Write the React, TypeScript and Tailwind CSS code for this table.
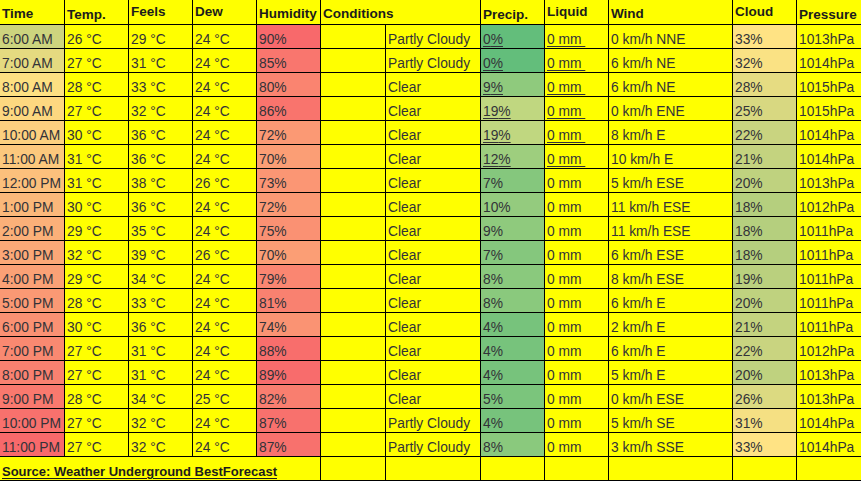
import React from 'react';

type Row = [string, number, number, number, number, string, number, string, number, number];

const rows: Row[] = [
  ['6:00 AM', 26, 29, 24, 90, 'Partly Cloudy', 0, '0 km/h NNE', 33, 1013],
  ['7:00 AM', 27, 31, 24, 85, 'Partly Cloudy', 0, '6 km/h NE', 32, 1014],
  ['8:00 AM', 28, 33, 24, 80, 'Clear', 9, '6 km/h NE', 28, 1015],
  ['9:00 AM', 27, 32, 24, 86, 'Clear', 19, '0 km/h ENE', 25, 1015],
  ['10:00 AM', 30, 36, 24, 72, 'Clear', 19, '8 km/h E', 22, 1014],
  ['11:00 AM', 31, 36, 24, 70, 'Clear', 12, '10 km/h E', 21, 1014],
  ['12:00 PM', 31, 38, 26, 73, 'Clear', 7, '5 km/h ESE', 20, 1013],
  ['1:00 PM', 30, 36, 24, 72, 'Clear', 10, '11 km/h ESE', 18, 1012],
  ['2:00 PM', 29, 35, 24, 75, 'Clear', 9, '11 km/h ESE', 18, 1011],
  ['3:00 PM', 32, 39, 26, 70, 'Clear', 7, '6 km/h ESE', 18, 1011],
  ['4:00 PM', 29, 34, 24, 79, 'Clear', 8, '8 km/h ESE', 19, 1011],
  ['5:00 PM', 28, 33, 24, 81, 'Clear', 8, '6 km/h E', 20, 1011],
  ['6:00 PM', 30, 36, 24, 74, 'Clear', 4, '2 km/h E', 21, 1011],
  ['7:00 PM', 27, 31, 24, 88, 'Clear', 4, '6 km/h E', 22, 1012],
  ['8:00 PM', 27, 31, 24, 89, 'Clear', 4, '5 km/h E', 20, 1013],
  ['9:00 PM', 28, 34, 25, 82, 'Clear', 5, '0 km/h ESE', 26, 1013],
  ['10:00 PM', 27, 32, 24, 87, 'Partly Cloudy', 4, '5 km/h SE', 31, 1014],
  ['11:00 PM', 27, 32, 24, 87, 'Partly Cloudy', 8, '3 km/h SSE', 33, 1014],
];

// colour scale helpers (Excel-ish conditional formatting)
const hex = (h: string) => [1, 3, 5].map((i) => parseInt(h.slice(i, i + 2), 16));
function mix(a: string, b: string, t: number) {
  const x = hex(a);
  const y = hex(b);
  const c = x.map((v, i) => Math.round(v + (y[i] - v) * Math.max(0, Math.min(1, t))));
  return `rgb(${c[0]},${c[1]},${c[2]})`;
}
function scale(stops: [number, string][], v: number) {
  for (let i = 0; i < stops.length - 1; i++) {
    const [a, ca] = stops[i];
    const [b, cb] = stops[i + 1];
    if (v <= b) return mix(ca, cb, (v - a) / (b - a));
  }
  return stops[stops.length - 1][1];
}

const timeColor = (i: number) => scale([[0, '#cdd47e'], [2, '#fde082'], [17, '#f8696b']], i);
const humColor = (v: number) => scale([[70, '#fb9e75'], [90, '#f8696b']], v);
const precipColor = (v: number) => scale([[0, '#63be7b'], [19, '#c0d780']], v);
const cloudColor = (v: number) => scale([[18, '#b5cf7e'], [33, '#ffe384']], v);

const cell = 'h-[24px] border-b border-r border-black pl-[2px] pt-[6px] leading-[18px] whitespace-pre overflow-hidden';
const head = 'h-[25px] border-b border-r border-black pl-[2px] leading-[18px] font-bold text-[13.5px] text-[#1c1c1c] whitespace-nowrap';
const ul = 'underline decoration-1 underline-offset-[2px]';

export default function App() {
  return (
    <div
      className="w-[861px] h-[481px] overflow-hidden bg-[#ffff00] text-[13.8px] text-[#333338]"
      style={{ fontFamily: '"Liberation Sans", Arial, sans-serif' }}
    >
      <div className="grid grid-cols-[65px_64px_64px_64px_64px_65px_95px_64px_64px_124px_64px_1fr]">
        {/* header */}
        <div className={`${head} pt-[5px]`}>Time</div>
        <div className={`${head} pt-[6px]`}>Temp.</div>
        <div className={`${head} pt-[3px]`}>Feels</div>
        <div className={`${head} pt-[3px]`}>Dew</div>
        <div className={`${head} pt-[5px]`}>Humidity</div>
        <div className={`${head} col-span-2 pt-[5px]`}>Conditions</div>
        <div className={`${head} pt-[6px]`}>Precip.</div>
        <div className={`${head} pt-[3px]`}>Liquid</div>
        <div className={`${head} pt-[5px]`}>Wind</div>
        <div className={`${head} pt-[3px]`}>Cloud</div>
        <div className={`${head} pt-[6px] border-r-0`}>Pressure</div>

        {rows.map((r, i) => {
          const u = i < 6 ? ul : '';
          return (
            <React.Fragment key={r[0]}>
              <div className={cell} style={{ backgroundColor: timeColor(i) }}>{r[0]}</div>
              <div className={cell}>{r[1]} °C</div>
              <div className={cell}>{r[2]} °C</div>
              <div className={cell}>{r[3]} °C</div>
              <div className={cell} style={{ backgroundColor: humColor(r[4]) }}>{r[4]}%</div>
              <div className={cell}></div>
              <div className={cell}>{r[5]}</div>
              <div className={cell} style={{ backgroundColor: precipColor(r[6]) }}>
                <span className={u}>{r[6]}%</span>
              </div>
              <div className={cell}>
                <span className={u}>{i < 6 ? '0 mm\u00a0' : '0 mm'}</span>
              </div>
              <div className={cell}>{r[7]}</div>
              <div className={cell} style={{ backgroundColor: cloudColor(r[8]) }}>{r[8]}%</div>
              <div className={`${cell} border-r-0`}>{r[9]}hPa</div>
            </React.Fragment>
          );
        })}

        {/* source row */}
        <div className={`${cell} col-span-5 pt-[5px] font-bold text-[13px] text-[#1c1c1c]`}>
          <span className={ul}>Source: Weather Underground BestForecast</span>
        </div>
        <div className={cell}></div>
        <div className={cell}></div>
        <div className={cell}></div>
        <div className={cell}></div>
        <div className={cell}></div>
        <div className={cell}></div>
        <div className={`${cell} border-r-0`}></div>
      </div>
    </div>
  );
}
